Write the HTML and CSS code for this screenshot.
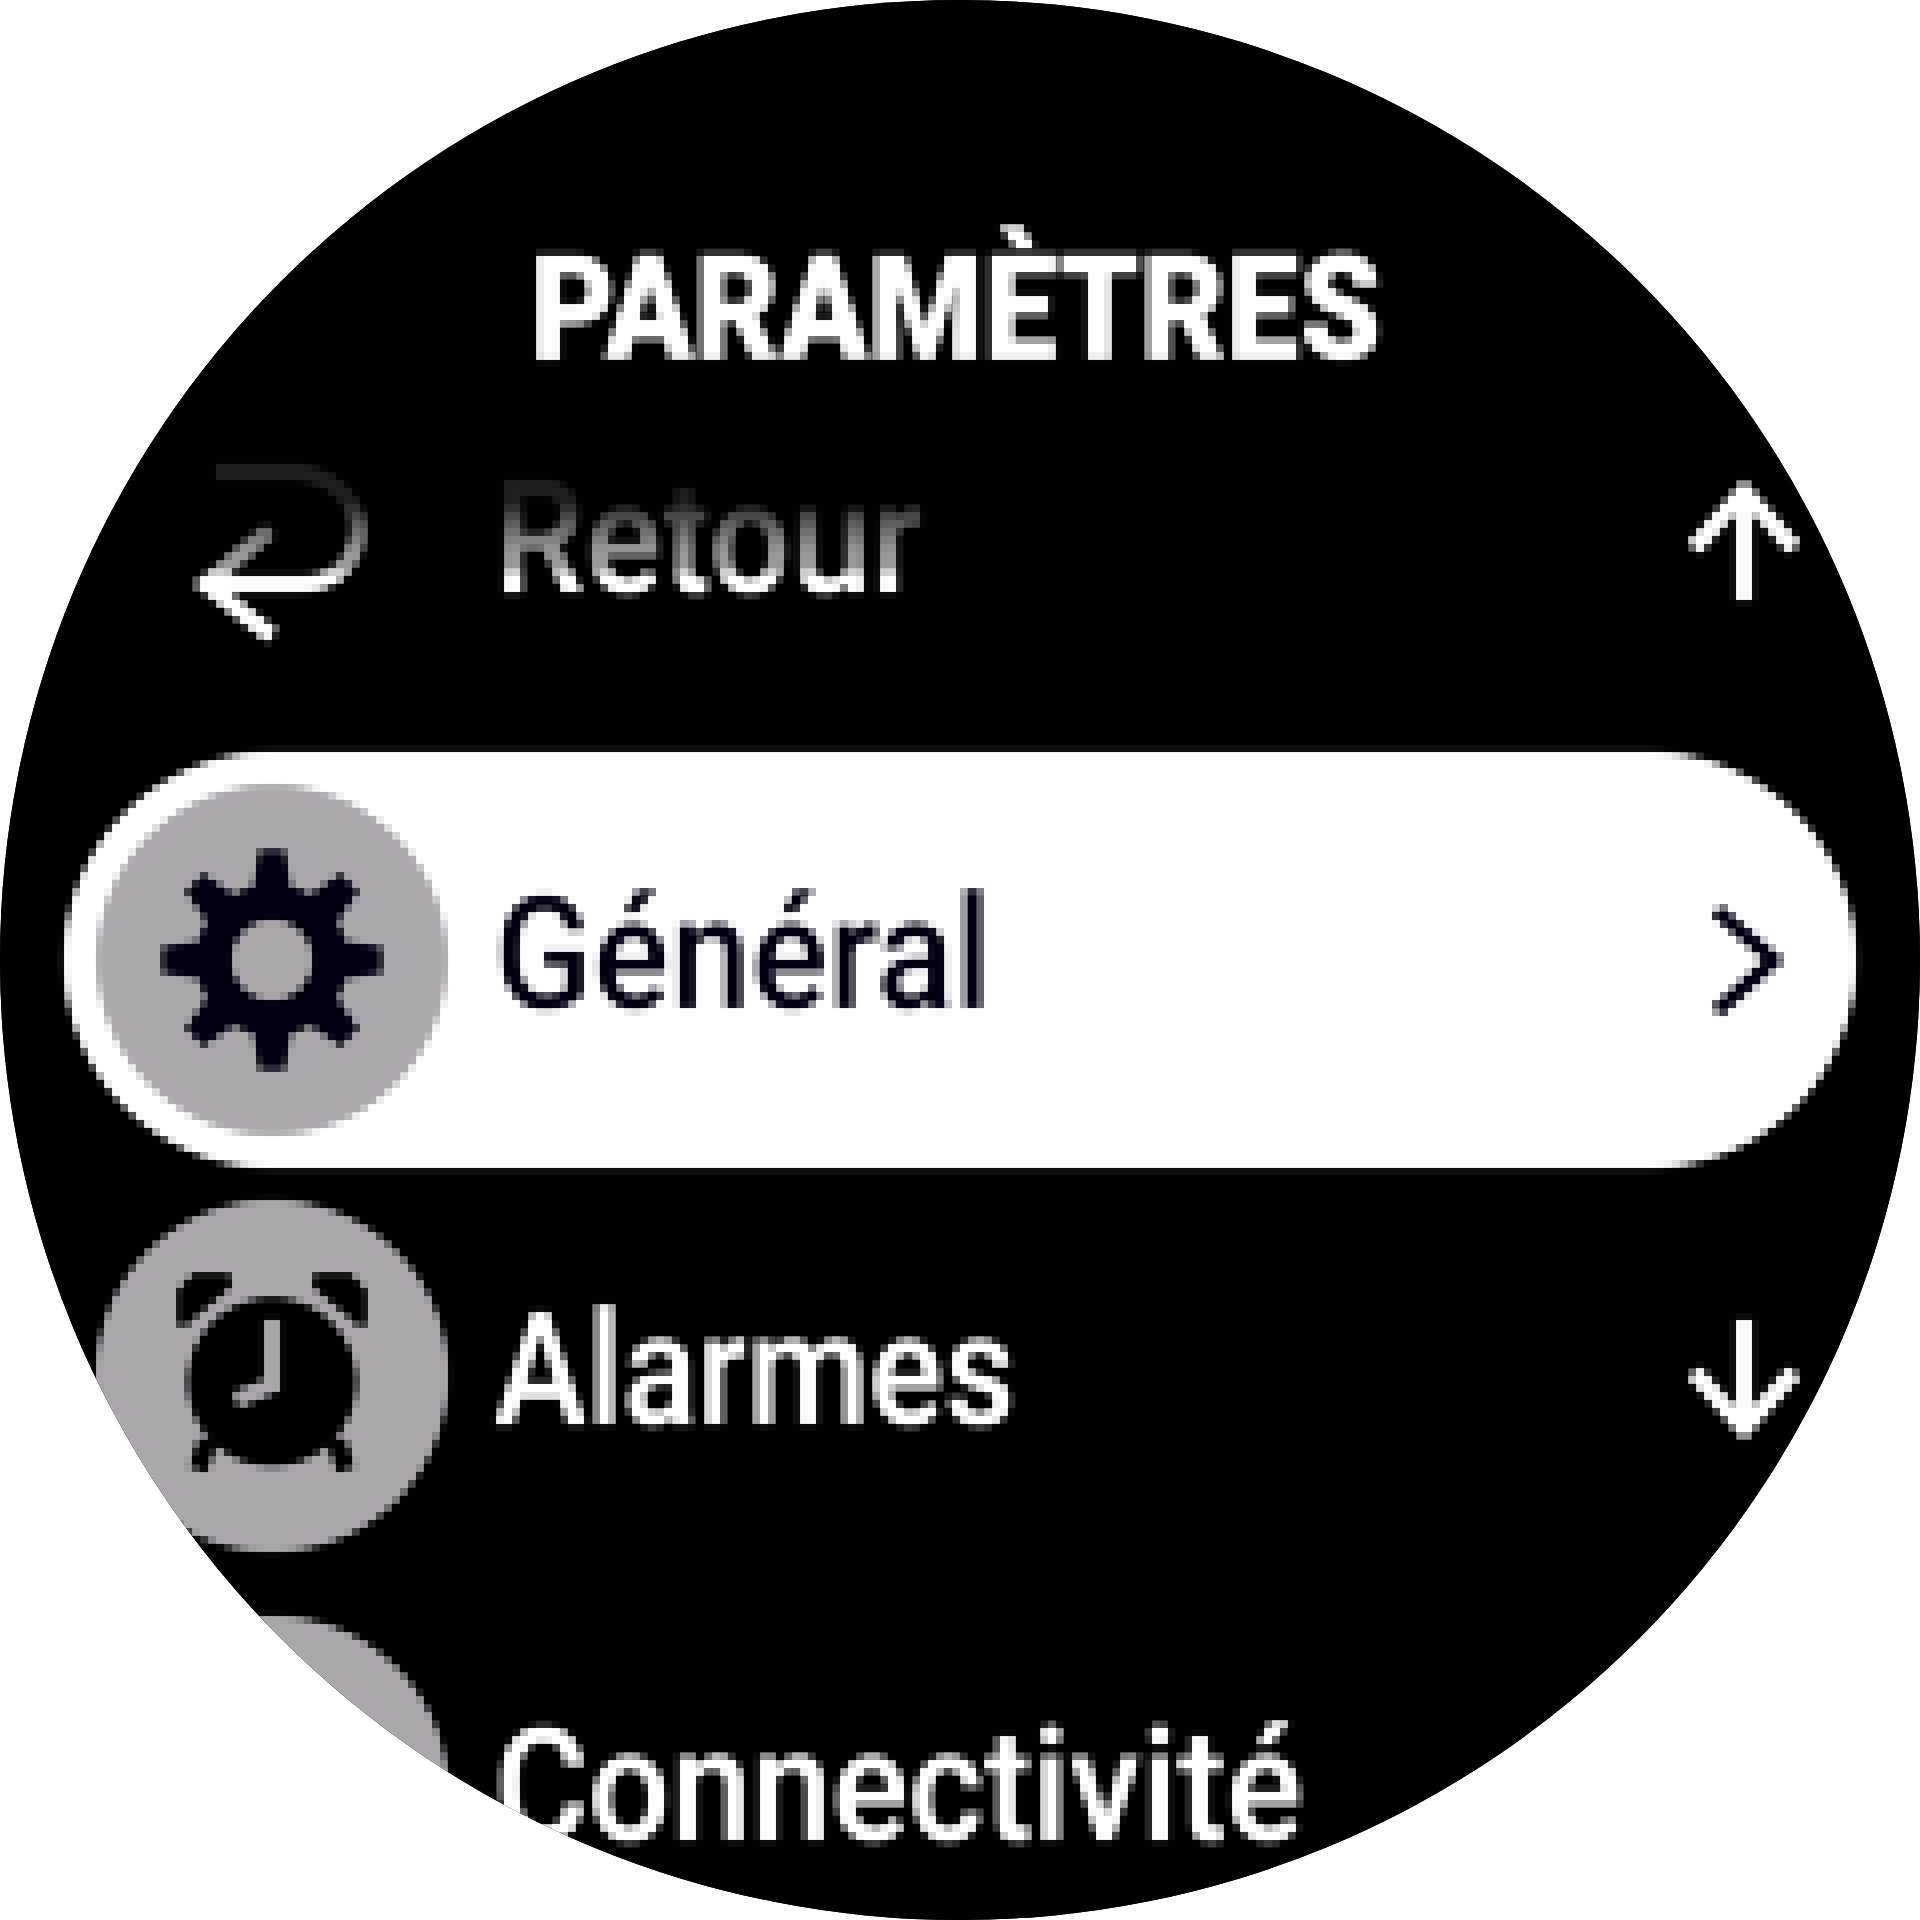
FILE: index.html
```html
<!DOCTYPE html>
<html lang="fr">
<head>
    <meta charset="UTF-8">
    <title>Paramètres</title>
    <link rel="stylesheet" href="styles.css">
</head>
<body>
    <!-- the watch display is 240x240, shown 8x -->
    <svg class="defs" width="0" height="0">
        <filter id="pixelate" x="0" y="0" width="100%" height="100%" color-interpolation-filters="sRGB">
            <feGaussianBlur in="SourceGraphic" stdDeviation="2" result="soft"/>
            <feFlood x="3" y="3" width="2" height="2" flood-color="#fff"/>
            <feComposite width="8" height="8"/>
            <feTile result="grid"/>
            <feComposite in="soft" in2="grid" operator="in"/>
            <feMorphology operator="dilate" radius="3"/>
        </filter>
    </svg>

    <main class="watch">
        <div class="screen">
            <h1 class="title"><span>PARAMÈTRES</span></h1>

            <div class="row">
                <div class="row-main row-fade">
                    <div class="icon">
                        <svg viewBox="0 0 352 352" width="352" height="352">
                            <g transform="translate(-96 -368)" fill="none" stroke="#fff" stroke-width="16">
                                <path d="M216 472H288C335 472 360 505 358 532C356 562 335 584 300 584H208"/>
                                <path d="M270 530L206 584L272 636"/>
                            </g>
                        </svg>
                    </div>
                    <span class="label">Retour</span>
                </div>
                <svg class="arrow arrow-up" viewBox="0 0 112 128" width="112" height="128">
                    <path d="M56 128V16M6 76L56 20L106 76" fill="none" stroke="#fff" stroke-width="16"/>
                </svg>
            </div>

            <div class="row row-active">
                <div class="row-main">
                    <div class="icon icon-disc">
                        <svg viewBox="0 0 352 352" width="352" height="352">
                            <g transform="translate(176 176)" fill="#020010">
                                <polygon id="tooth" points="-22,-60 -13,-110 13,-110 22,-60"/>
                                <use href="#tooth" transform="rotate(45)"/>
                                <use href="#tooth" transform="rotate(90)"/>
                                <use href="#tooth" transform="rotate(135)"/>
                                <use href="#tooth" transform="rotate(180)"/>
                                <use href="#tooth" transform="rotate(225)"/>
                                <use href="#tooth" transform="rotate(270)"/>
                                <use href="#tooth" transform="rotate(315)"/>
                                <circle r="58" fill="none" stroke="#020010" stroke-width="36"/>
                            </g>
                        </svg>
                    </div>
                    <span class="label">Général</span>
                </div>
                <svg class="chevron" viewBox="0 0 80 128" width="80" height="128">
                    <path d="M4 14L62 64L4 116" fill="none" stroke="#020010" stroke-width="15"/>
                </svg>
            </div>

            <div class="row">
                <div class="row-main">
                    <div class="icon icon-disc">
                        <svg viewBox="0 0 352 352" width="352" height="352">
                            <g transform="translate(-96 -1200)">
                                <circle cx="272" cy="1382" r="85" fill="#000"/>
                                <path d="M177 1322V1290L193 1273H230L232 1287L193 1320L186 1327H180Z" fill="#000"/>
                                <path d="M367 1322V1290L351 1273H314L312 1287L351 1320L358 1327H364Z" fill="#000"/>
                                <path d="M208 1440L198 1470M336 1440L346 1470" fill="none" stroke="#000" stroke-width="20"/>
                                <path d="M272 1320V1385L236 1400" fill="none" stroke="#aaa8ab" stroke-width="16"/>
                            </g>
                        </svg>
                    </div>
                    <span class="label label-alarm">Alarmes</span>
                </div>
                <svg class="arrow arrow-down" viewBox="0 0 112 128" width="112" height="128">
                    <path d="M56 0V112M6 52L56 108L106 52" fill="none" stroke="#fff" stroke-width="16"/>
                </svg>
            </div>

            <div class="row">
                <div class="row-main">
                    <div class="icon icon-disc"></div>
                    <span class="label">Connectivité</span>
                </div>
            </div>
        </div>
    </main>
</body>
</html>
```

FILE: styles.css
```css
body {
    margin: 0;
    background-color: #ffffff;
    font-family: Roboto, "Liberation Sans", sans-serif;
}
.defs {
    display: block;
}
.watch {
    width: 1920px;
    height: 1920px;
    border-radius: 50%;
    overflow: hidden;
    background-color: #000000;
}
.screen {
    height: 1920px;
    overflow: hidden;
    background-color: #000000;
    color: #ffffff;
    filter: url(#pixelate);
}
.title {
    height: 336px;
    margin: 0;
    padding: 237px 8px 0 0;
    box-sizing: border-box;
    text-align: center;
    font-size: 146px;
    font-weight: 900;
    line-height: 1;
}
.title span {
    display: inline-block;
    transform: scaleX(0.898);
}
.row {
    display: flex;
    align-items: center;
    justify-content: space-between;
    height: 416px;
    padding: 0 120px 0 96px;
    box-sizing: border-box;
}
.row-main {
    display: flex;
    align-items: center;
}
/* the item above the selection dims towards the title */
.row-fade {
    -webkit-mask-image: linear-gradient(to bottom, rgba(0, 0, 0, 0.12) 134px, rgba(0, 0, 0, 0.4) 159px, rgba(0, 0, 0, 0.6) 184px, rgba(0, 0, 0, 0.6) 199px, #000000 209px);
    mask-image: linear-gradient(to bottom, rgba(0, 0, 0, 0.12) 134px, rgba(0, 0, 0, 0.4) 159px, rgba(0, 0, 0, 0.6) 184px, rgba(0, 0, 0, 0.6) 199px, #000000 209px);
}
.row-active {
    margin: 0 64px;
    padding: 0 64px 0 32px;
    border-radius: 208px;
    background-color: #ffffff;
    color: #020010;
}
.icon {
    flex: none;
    width: 352px;
    height: 352px;
    border-radius: 50%;
}
.icon svg {
    display: block;
}
.icon-disc {
    background-color: #aaa8ab;
}
.label {
    display: inline-block;
    margin-left: 46px;
    margin-bottom: 12px;
    font-size: 158px;
    font-weight: 500;
    line-height: 1;
    white-space: nowrap;
    transform: scaleX(0.915);
    transform-origin: left center;
}
.label-alarm {
    transform: scaleX(0.885);
}
.arrow-up {
    margin-bottom: 16px;
}
.arrow-down {
    margin-top: 16px;
}
```
